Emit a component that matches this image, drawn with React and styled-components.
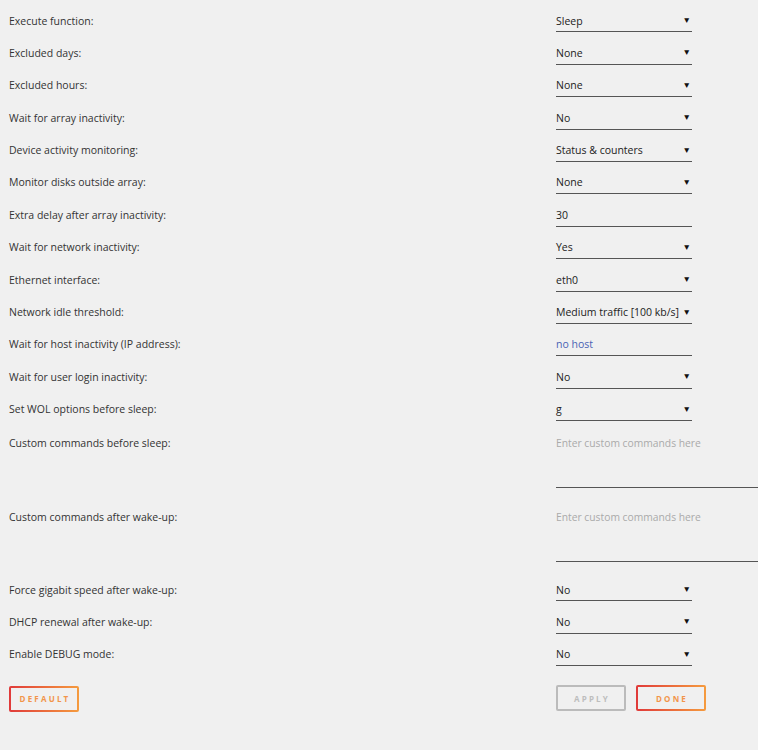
import React from 'react'
import styled, { createGlobalStyle } from 'styled-components'

const GlobalStyle = createGlobalStyle`
	html, body {
		margin: 0;
		padding: 0;
		background: #f0f0f0;
	}
	body {
		font-family: "Open Sans", "Liberation Sans", sans-serif;
		overflow: hidden;
	}
`

const Form = styled.form`
	padding: 0 0 40px 9px;
	width: 749px;
	box-sizing: border-box;
`

const Row = styled.div`
	display: grid;
	grid-template-columns: 547px 1fr;
	height: ${p => (p.tall ? '67px' : '32.4px')};
	margin-bottom: ${p => (p.tall ? '7px' : '0')};
`

const Label = styled.label`
	font-size: 10.5px;
	line-height: 16px;
	color: #333;
	padding-top: ${p => (p.tall ? '14px' : '12.5px')};
`

const Field = styled.div`
	position: relative;
	width: 136px;
	box-sizing: border-box;
	padding-top: 12.5px;
	font-size: 10.5px;
	line-height: 16px;
	color: ${p => (p.link ? '#4a62b4' : '#222')};
	border-bottom: 1px solid #555;
	white-space: nowrap;
`

const Arrow = styled.span`
	position: absolute;
	right: 1px;
	top: 12px;
	font-size: 8.5px;
	color: #111;
`

const Area = styled.div`
	box-sizing: border-box;
	margin-right: -12px;
	padding-top: 14px;
	font-size: 10.3px;
	line-height: 16px;
	color: #aaa;
	border-bottom: 1px solid #555;
`

const Buttons = styled.div`
	display: grid;
	grid-template-columns: 547px 1fr;
	margin-top: 19px;
`

const Group = styled.div`
	display: flex;
	gap: 10px;
`

const Button = styled.button`
	width: 70px;
	height: 26px;
	box-sizing: border-box;
	padding: 0 0 0 2px;
	font-family: "Open Sans", "Liberation Sans", sans-serif;
	font-size: 8px;
	font-weight: 700;
	letter-spacing: 2.2px;
	text-transform: uppercase;
	border-radius: 2px;
	cursor: pointer;
	color: ${p => (p.muted ? '#bdbdbd' : '#f2954a')};
	border: 2px solid transparent;
	background: ${p =>
		p.muted
			? 'linear-gradient(#f0f0f0, #f0f0f0) padding-box, linear-gradient(#bbb, #bbb) border-box'
			: 'linear-gradient(#f0f0f0, #f0f0f0) padding-box, linear-gradient(90deg, #e03a3a, #f59b3e) border-box'};
`

const rows = [
	['Execute function:', 'Sleep'],
	['Excluded days:', 'None'],
	['Excluded hours:', 'None'],
	['Wait for array inactivity:', 'No'],
	['Device activity monitoring:', 'Status & counters'],
	['Monitor disks outside array:', 'None'],
	['Extra delay after array inactivity:', '30', 'input'],
	['Wait for network inactivity:', 'Yes'],
	['Ethernet interface:', 'eth0'],
	['Network idle threshold:', 'Medium traffic [100 kb/s]'],
	['Wait for host inactivity (IP address):', 'no host', 'link'],
	['Wait for user login inactivity:', 'No'],
	['Set WOL options before sleep:', 'g'],
	['Custom commands before sleep:', '', 'area'],
	['Custom commands after wake-up:', '', 'area'],
	['Force gigabit speed after wake-up:', 'No'],
	['DHCP renewal after wake-up:', 'No'],
	['Enable DEBUG mode:', 'No'],
]

export default function App() {
	return (
		<>
			<GlobalStyle />
			<Form>
				{rows.map(([label, value, kind]) => (
					<Row key={label} tall={kind === 'area'}>
						<Label tall={kind === 'area'}>{label}</Label>
						{kind === 'area' ? (
							<Area>Enter custom commands here</Area>
						) : (
							<Field link={kind === 'link'}>
								{value}
								{!kind && <Arrow>▼</Arrow>}
							</Field>
						)}
					</Row>
				))}
				<Buttons>
					<div>
						<Button type="button">Default</Button>
					</div>
					<Group>
						<Button type="button" muted>Apply</Button>
						<Button type="button">Done</Button>
					</Group>
				</Buttons>
			</Form>
		</>
	)
}
